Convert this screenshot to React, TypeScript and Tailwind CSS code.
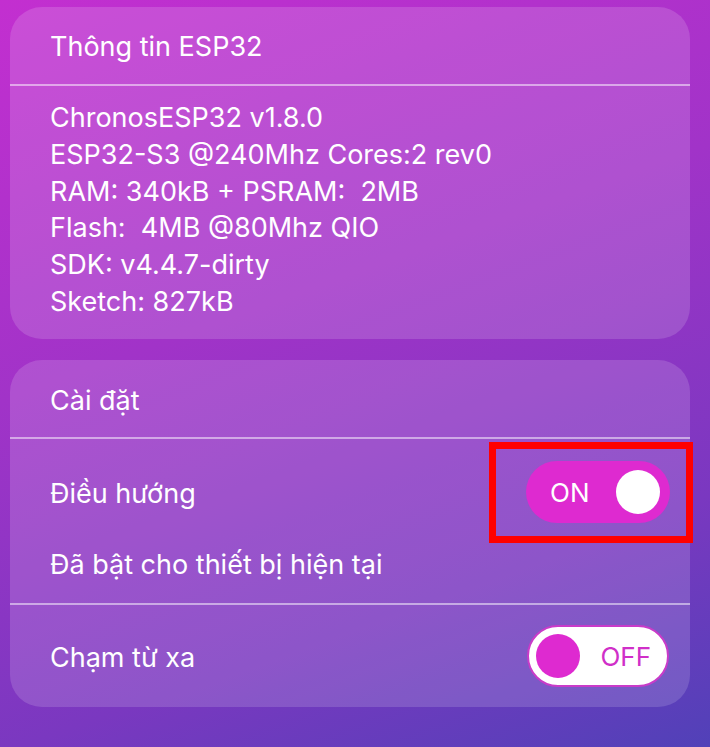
import React from "react";

export default function App() {
  return (
    <div
      className="relative w-[710px] h-[747px] overflow-hidden bg-[linear-gradient(160deg,#c32fd0_0%,#a133c8_40%,#7a38c0_75%,#5141b8_100%)] pl-[10px] pt-[7px] text-white"
      style={{ fontFamily: "Inter, 'Noto Sans', sans-serif" }}
    >
      <div className="flex flex-col gap-[21px] w-[680px]">
        {/* Card 1 */}
        <div className="h-[332px] rounded-[32px] bg-white/15 flex flex-col">
          <div className="h-[79px] flex items-center pl-[40px] pt-[4px] text-[27px] border-b-2 border-white/50">
            Thông tin ESP32
          </div>
          <div className="pl-[40px] pt-[14px] text-[27px] leading-[36.8px]">
            <div>ChronosESP32 v1.8.0</div>
            <div>ESP32-S3 @240Mhz Cores:2 rev0</div>
            <div className="whitespace-pre">RAM: 340kB + PSRAM:  2MB</div>
            <div className="whitespace-pre">Flash:  4MB @80Mhz QIO</div>
            <div>SDK: v4.4.7-dirty</div>
            <div>Sketch: 827kB</div>
          </div>
        </div>

        {/* Card 2 */}
        <div className="h-[347px] rounded-[32px] bg-white/15 flex flex-col">
          <div className="h-[79px] flex items-center pl-[40px] pt-[5px] text-[27px] border-b-2 border-white/50">
            Cài đặt
          </div>
          <div className="h-[166px] flex flex-col pl-[40px] pr-[20px] border-b-2 border-white/50">
            <div className="h-[106px] flex items-center justify-between">
              <span className="text-[27px] mt-[4px]">Điều hướng</span>
              <div className="w-[144px] h-[62px] rounded-full bg-[#de2ad0] flex items-center pl-[24px] pr-[10px] justify-between">
                <span className="text-[26px]">ON</span>
                <span className="w-[44px] h-[44px] rounded-full bg-white" />
              </div>
            </div>
            <div className="text-[27px] leading-[36px] mt-[2px]">Đã bật cho thiết bị hiện tại</div>
          </div>
          <div className="flex-1 flex items-center justify-between pl-[40px] pr-[21px]">
            <span className="text-[27px] mt-[4px]">Chạm từ xa</span>
            <div className="w-[142px] h-[62px] rounded-full bg-white border-2 border-[#c93bc9] flex items-center pl-[7px] pr-[16px] justify-between">
              <span className="w-[44px] h-[44px] rounded-full bg-[#de2ad0]" />
              <span className="text-[26px] text-[#d02fc8]">OFF</span>
            </div>
          </div>
        </div>
      </div>

      {/* Annotation box */}
      <div className="absolute left-[489px] top-[442px] w-[204px] h-[101px] border-[7px] border-[#ff0000]" />
    </div>
  );
}
